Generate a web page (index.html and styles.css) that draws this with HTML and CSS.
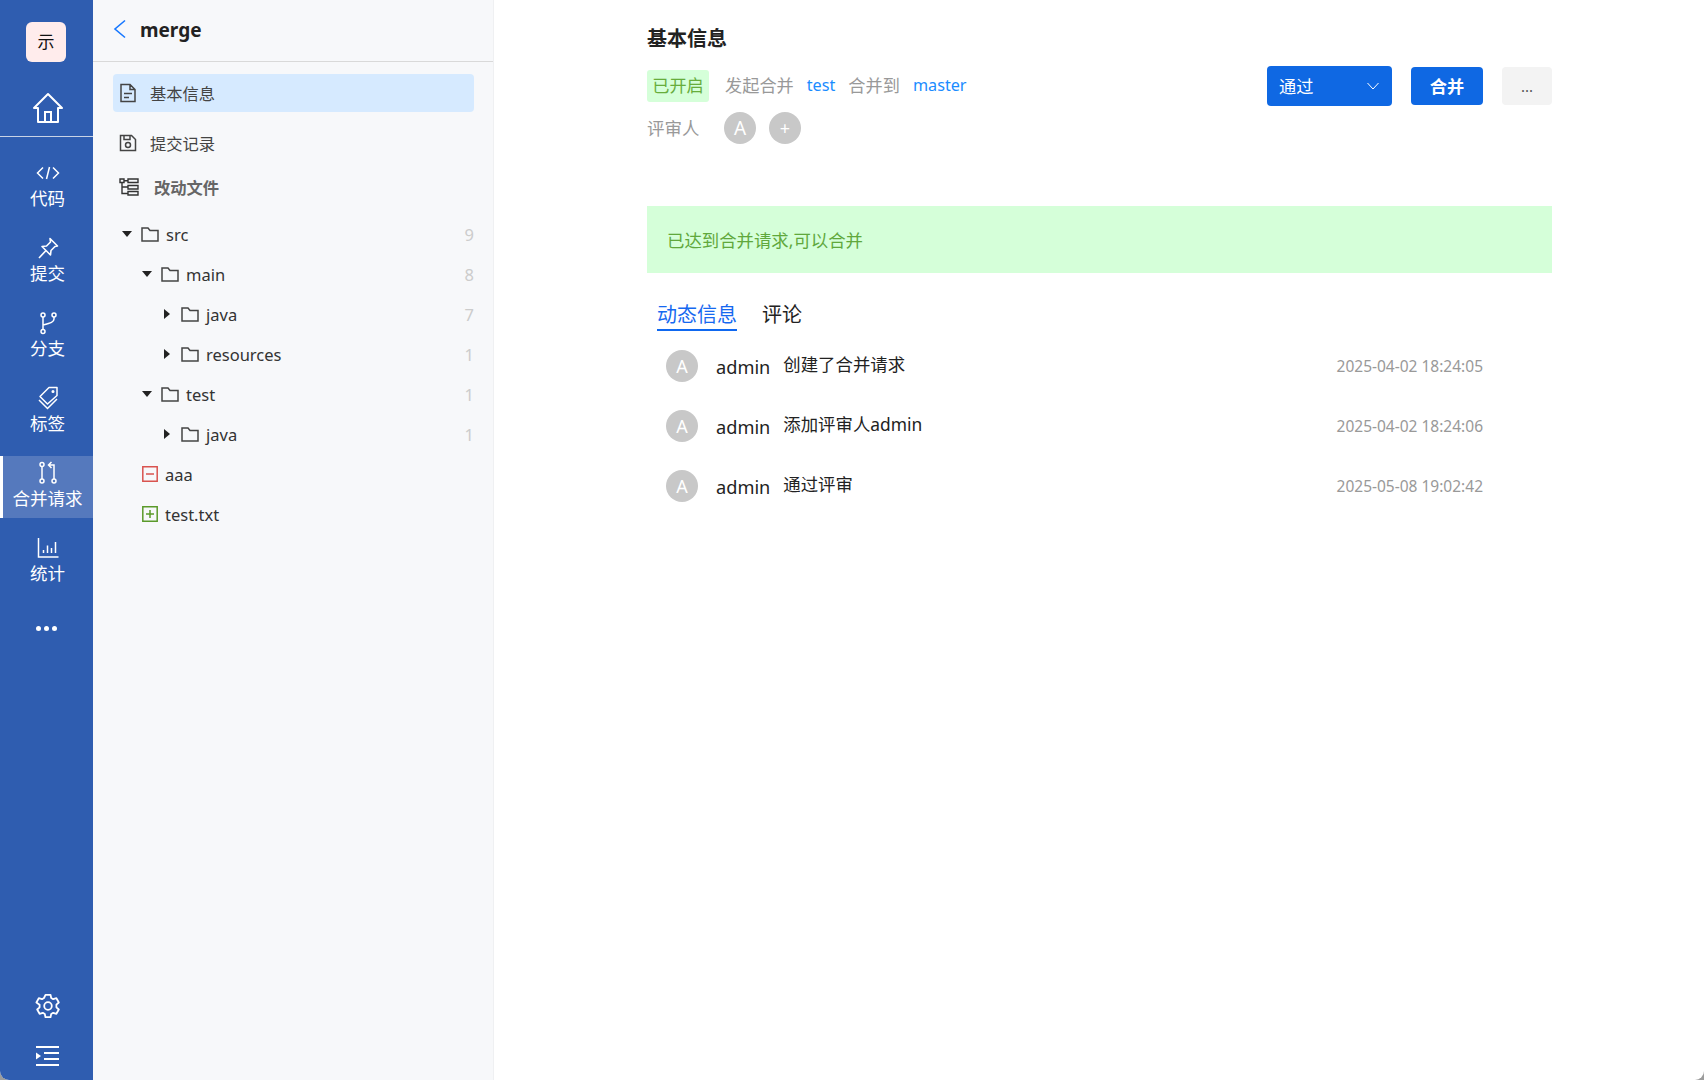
FILE: index.html
```html
<!DOCTYPE html>
<html lang="zh-CN">
<head>
  <meta charset="UTF-8">
  <meta name="viewport" content="width=device-width, initial-scale=1.0">
  <title>merge</title>
  <link rel="stylesheet" href="styles.css">
</head>
<body>
  <aside class="rail">
    <div class="rail-logo">示</div>
    <a class="rail-home" href="#">
      <svg width="32" height="32" viewBox="0 0 32 32" fill="none" stroke="#fff" stroke-width="2"><path d="M2 16 16 2l14 14h-4v14H6V16z" stroke-linejoin="round"/><path d="M13 30V20h6v10"/></svg>
    </a>
    <nav class="rail-nav">
      <a class="rail-item" href="#">
        <svg width="24" height="24" viewBox="0 0 24 24" fill="none" stroke="#fff" stroke-width="1.5"><path d="M7 6.5 1.5 12 7 17.5M17 6.5l5.500 5.500L17 17.500M13.500 6l-3 12"/></svg>
        <span>代码</span>
      </a>
      <a class="rail-item" href="#">
        <svg width="24" height="24" viewBox="0 0 24 24" fill="none" stroke="#fff" stroke-width="1.600"><path d="M14 2.500 21.500 10l-2.500.5-4 4-.5 4.500L6 10.500l4.500-.5 4-4z" stroke-linejoin="round"/><path d="M10 14.500 3 22"/></svg>
        <span>提交</span>
      </a>
      <a class="rail-item" href="#">
        <svg width="24" height="24" viewBox="0 0 24 24" fill="none" stroke="#fff" stroke-width="1.500"><circle cx="7" cy="4" r="2"/><circle cx="7" cy="20.500" r="2"/><circle cx="18" cy="4" r="2"/><path d="M7 6v12.500M18 6v2c0 3-3 4-11 6"/></svg>
        <span>分支</span>
      </a>
      <a class="rail-item" href="#">
        <svg width="24" height="24" viewBox="0 0 24 24" fill="none" stroke="#fff" stroke-width="1.500"><path d="M13 1.500h8v8L11.500 18 4 10.500z" stroke-linejoin="round"/><path d="m3 14 8.500 8.500L21 13"/><circle cx="17" cy="5.500" r=".8"/></svg>
        <span>标签</span>
      </a>
      <a class="rail-item active" href="#">
        <svg width="24" height="24" viewBox="0 0 24 24" fill="none" stroke="#fff" stroke-width="1.500"><circle cx="6" cy="3.500" r="2"/><circle cx="6" cy="20" r="2"/><circle cx="18" cy="20" r="2"/><path d="M6 5.500V18M18 18V4h-5M15.500 1 12.500 4l3 3"/></svg>
        <span>合并请求</span>
      </a>
      <a class="rail-item" href="#">
        <svg width="24" height="24" viewBox="0 0 24 24" fill="none" stroke="#fff" stroke-width="1.500"><path d="M2.500 2v19h20M7.500 17v-3M11.500 17V9.500M15.500 17v-5M19.500 17V6"/></svg>
        <span>统计</span>
      </a>
    </nav>
    <div class="rail-more"><i></i><i></i><i></i></div>
    <div class="rail-bottom">
      <a href="#">
        <svg width="26" height="26" viewBox="0 0 26 26" fill="none" stroke="#fff" stroke-width="1.800"><path d="M10.500 1.800h5l.7 3.200 2 1.200 3.200-1 2.400 4.300-2.400 2.200v2.600l2.400 2.200-2.400 4.300-3.200-1-2 1.200-.7 3.200h-5l-.7-3.200-2-1.200-3.200 1-2.400-4.300 2.400-2.200v-2.600L1.400 9.500l2.400-4.300 3.200 1 2-1.200z" stroke-linejoin="round"/><circle cx="13" cy="13" r="3.800"/></svg>
      </a>
      <a href="#">
        <svg width="24" height="20" viewBox="0 0 24 20" fill="#fff"><rect width="23" height="2"/><rect y="18" width="23" height="2"/><rect x="8" y="6" width="15" height="2"/><rect x="8" y="12" width="15" height="2"/><path d="M0 6.500 5 10l-5 3.500z"/></svg>
      </a>
    </div>
  </aside>

  <section class="panel">
    <header class="panel-head">
      <svg width="14" height="20" viewBox="0 0 14 20" fill="none" stroke="#1677ff" stroke-width="1.600"><path d="M12 1.500 2 10l10 8.500"/></svg>
      <h1>merge</h1>
    </header>
    <a class="panel-link current" href="#">
      <svg width="18" height="20" viewBox="0 0 18 20" fill="none" stroke="#444" stroke-width="1.500"><path d="M2 1.500h9l5 5v12H2zM11 1.500v5h5M5 10.500h8M5 14.500h5"/></svg>
      <span>基本信息</span>
    </a>
    <a class="panel-link second" href="#">
      <svg width="18" height="18" viewBox="0 0 18 18" fill="none" stroke="#444" stroke-width="1.500"><path d="M1.500 1.500h11l4 4v11h-15zM5 1.500v4h6v-4"/><circle cx="9" cy="11" r="2.500"/></svg>
      <span>提交记录</span>
    </a>
    <div class="panel-link files">
      <svg width="20" height="18" viewBox="0 0 20 18" fill="none" stroke="#333" stroke-width="1.400"><path d="M1 1h4v3.500H1zM9 1h10v3.500H9zM9 7.500h10V11H9zM9 13.500h10V17H9zM3 4.500v11h6M3 9h6M5 2.700h4"/></svg>
      <span>改动文件</span>
    </div>
    <ul class="tree">
      <li class="row lvl0"><i class="caret down"></i><svg class="folder" viewBox="0 0 18 15"><path d="M1 1h6l2 2.500h8V14H1z"/></svg><span class="name">src</span><span class="count">9</span></li>
      <li class="row lvl1"><i class="caret down"></i><svg class="folder" viewBox="0 0 18 15"><path d="M1 1h6l2 2.500h8V14H1z"/></svg><span class="name">main</span><span class="count">8</span></li>
      <li class="row lvl2"><i class="caret right"></i><svg class="folder" viewBox="0 0 18 15"><path d="M1 1h6l2 2.500h8V14H1z"/></svg><span class="name">java</span><span class="count">7</span></li>
      <li class="row lvl2"><i class="caret right"></i><svg class="folder" viewBox="0 0 18 15"><path d="M1 1h6l2 2.500h8V14H1z"/></svg><span class="name">resources</span><span class="count">1</span></li>
      <li class="row lvl1"><i class="caret down"></i><svg class="folder" viewBox="0 0 18 15"><path d="M1 1h6l2 2.500h8V14H1z"/></svg><span class="name">test</span><span class="count">1</span></li>
      <li class="row lvl2"><i class="caret right"></i><svg class="folder" viewBox="0 0 18 15"><path d="M1 1h6l2 2.500h8V14H1z"/></svg><span class="name">java</span><span class="count">1</span></li>
      <li class="row lvl-file">
        <svg class="mark del" viewBox="0 0 16 16"><path d="M.8.8h14.400v14.400H.8zM4 8h8"/></svg><span class="name">aaa</span>
      </li>
      <li class="row lvl-file">
        <svg class="mark add" viewBox="0 0 16 16"><path d="M.8.8h14.400v14.400H.8zM4 8h8M8 4v8"/></svg><span class="name">test.txt</span>
      </li>
    </ul>
  </section>

  <main class="main">
    <h2>基本信息</h2>
    <div class="meta">
      <span class="tag">已开启</span>
      <span class="muted first">发起合并</span>
      <a class="branch" href="#">test</a>
      <span class="muted">合并到</span>
      <a class="branch" href="#">master</a>
      <div class="actions">
        <button class="select">通过<svg width="12" height="8" viewBox="0 0 12 8" fill="none" stroke="#fff" stroke-width="1"><path d="m.5 1 5.500 6 5.500-6"/></svg></button>
        <button class="merge">合并</button>
        <button class="more">...</button>
      </div>
    </div>
    <div class="reviewers">
      <span class="muted label">评审人</span>
      <span class="avatar">A</span>
      <span class="avatar plus">+</span>
    </div>
    <div class="notice">已达到合并请求,可以合并</div>
    <div class="tabs">
      <a class="tab on" href="#">动态信息</a>
      <a class="tab" href="#">评论</a>
    </div>
    <ul class="events">
      <li class="event"><span class="avatar">A</span><span class="who">admin</span><span class="what">创建了合并请求</span><time>2025-04-02 18:24:05</time></li>
      <li class="event"><span class="avatar">A</span><span class="who">admin</span><span class="what">添加评审人admin</span><time>2025-04-02 18:24:06</time></li>
      <li class="event"><span class="avatar">A</span><span class="who">admin</span><span class="what">通过评审</span><time>2025-05-08 19:02:42</time></li>
    </ul>
  </main>
</body>
</html>
```

FILE: styles.css
```css
* { box-sizing: border-box; }

/* the capture shows the window's rounded lower corners */
html {
  overflow: hidden;
  background: #9c9c9c;
}

body {
  margin: 0;
  height: 1080px;
  display: flex;
  overflow: hidden;
  background: #fff;
  border-radius: 0 0 9px 9px;
  color: #222;
  font-family: "Noto Sans", "Noto Sans CJK SC", sans-serif;
}

a { color: inherit; text-decoration: none; }
ul { list-style: none; margin: 0; padding: 0; }

/* left rail */
.rail {
  width: 93px;
  flex: none;
  display: flex;
  flex-direction: column;
  background: #2f5db0;
  color: #fff;
}
.rail-logo {
  width: 40px;
  height: 40px;
  margin: 22px 0 0 26px;
  border-radius: 6px;
  background: #ffecec;
  color: #111;
  font-size: 17px;
  line-height: 40px;
  text-align: center;
}
.rail-home {
  height: 75px;
  display: flex;
  align-items: center;
  justify-content: center;
  border-bottom: 1px solid #c9d3e6;
  padding: 17px 0 0 2px;
}
.rail-nav { margin-top: 19px; }
.rail-item {
  height: 62px;
  margin-bottom: 13px;
  display: flex;
  flex-direction: column;
  align-items: center;
  font-size: 17.500px;
  line-height: 24px;
  padding: 5px 0 0 2px;
}
.rail-item svg { display: block; margin-bottom: 1px; }
.rail-item.active {
  background: #5579bd;
  border-left: 3px solid #fff;
  padding-left: 0;
  padding-right: 1px;
}
.rail-more {
  display: flex;
  justify-content: center;
  gap: 3px;
  margin-top: 20px;
}
.rail-more i {
  width: 5px;
  height: 5px;
  border-radius: 50%;
  background: #fff;
}
.rail-bottom {
  margin-top: auto;
  padding: 0 0 14px 2px;
  display: flex;
  flex-direction: column;
  align-items: center;
  gap: 27px;
}
.rail-bottom a { display: block; line-height: 0; }

/* second column */
.panel {
  width: 401px;
  flex: none;
  background: #f7f8fa;
  border-right: 1px solid #eff0f2;
}
.panel-head {
  height: 62px;
  padding: 0 0 1px 20px;
  display: flex;
  align-items: center;
  gap: 13px;
  border-bottom: 1px solid #d9d9d9;
}
.panel-head svg { margin-bottom: 3px; }
.panel-head h1 {
  margin: 0;
  font-size: 19px;
  font-weight: 700;
  color: #222;
}
.panel-link {
  display: flex;
  align-items: center;
  height: 38px;
  margin: 12px 19px 0 20px;
  padding-left: 6px;
  gap: 13px;
  font-size: 16.300px;
  color: #444;
  border-radius: 4px;
}
.panel-link.current { background: #d6eaff; }
.panel-link.second { margin-top: 12px; }
.panel-link.files {
  margin-top: 6px;
  padding-left: 6px;
  gap: 15px;
  font-weight: 700;
  color: #666;
}
.tree { margin-top: 8px; padding-right: 19px; }
.row {
  height: 40px;
  display: flex;
  align-items: center;
  font-size: 16.500px;
  color: #333;
}
.lvl0 { padding-left: 28px; }
.lvl1 { padding-left: 48px; }
.lvl2 { padding-left: 68px; }
.lvl-file { padding-left: 49px; }
.caret {
  width: 12px;
  display: flex;
  justify-content: center;
  margin-right: 8px;
}
.caret::before { content: ""; border-style: solid; border-color: transparent; }
.caret.down::before { border-width: 6px 5px 0; border-top-color: #222; }
.caret.right::before { border-width: 5px 0 5px 6px; border-left-color: #222; }
.folder {
  width: 18px;
  height: 15px;
  fill: none;
  stroke: #444;
  stroke-width: 1.500;
  margin-right: 7px;
}
.mark {
  width: 16px;
  height: 16px;
  fill: none;
  stroke-width: 1.500;
  margin-right: 7px;
}
.mark.del { stroke: #d9534f; }
.mark.add { stroke: #5b9a2a; }
.count { margin-left: auto; color: #ccc; }

/* main */
.main {
  width: 905px;
  margin-left: 153px;
  padding-top: 23px;
}
.main h2 {
  margin: 0;
  font-size: 20px;
  line-height: 32px;
  font-weight: 700;
  color: #222;
}
.meta {
  display: flex;
  align-items: center;
  height: 40px;
  margin-top: 11px;
  font-size: 17.200px;
}
.meta > .muted { position: relative; top: -2px; }
.tag {
  width: 62px;
  height: 32px;
  border-radius: 3px;
  background: #d5ffd9;
  color: #67ad3c;
  line-height: 32px;
  text-align: center;
}
.muted { color: #999; }
.first { margin-left: 16px; }
.branch {
  color: #1a8cff;
  margin: 0 13px;
  font-size: 16.200px;
  position: relative;
  top: -1px;
}
.actions {
  margin-left: auto;
  display: flex;
  align-items: center;
  gap: 19px;
}
.actions button {
  border: 0;
  border-radius: 4px;
  font: inherit;
  height: 38px;
  padding: 0;
}
.select {
  width: 125px;
  height: 40px !important;
  background: #0f68e3;
  color: #fff;
  display: flex;
  align-items: center;
  justify-content: space-between;
  padding: 0 13px 2px 12px !important;
}
.select svg { margin-top: 2px; }
.merge { width: 72px; background: #0f68e3; color: #fff; font-weight: 700 !important; padding-bottom: 2px !important; }
.more { width: 50px; background: #f3f3f3; color: #555; font-size: 15px !important; }
.reviewers {
  display: flex;
  align-items: center;
  height: 32px;
  margin-top: 6px;
  font-size: 17.500px;
}
.label { width: 77px; position: relative; top: -1px; }
.avatar {
  width: 32px;
  height: 32px;
  flex: none;
  border-radius: 50%;
  background: #c8c8c8;
  color: #fff;
  font-size: 19px;
  line-height: 32px;
  text-align: center;
}
.plus { margin-left: 13px; font-size: 18px; }
.notice {
  height: 67px;
  margin-top: 62px;
  padding: 2px 0 0 20px;
  background: #d5ffd9;
  color: #60a83c;
  font-size: 17.400px;
  line-height: 65px;
}
.tabs {
  display: flex;
  gap: 25px;
  margin: 25px 0 0 10px;
  font-size: 20px;
  line-height: 34px;
}
.tab { color: #222; height: 33px; }
.tab.on { color: #1668f0; border-bottom: 2px solid #0f68f0; }
.events { margin-top: 5px; padding-left: 19px; }
.event {
  display: flex;
  align-items: center;
  height: 60px;
}
.event .avatar { font-size: 18px; }
.who { margin-left: 18px; font-size: 18.200px; position: relative; top: 1px; }
.what { margin-left: 13px; font-size: 17.400px; position: relative; top: -3px; }
time { margin-left: auto; margin-right: 69px; font-size: 15.500px; color: #999; }
```
